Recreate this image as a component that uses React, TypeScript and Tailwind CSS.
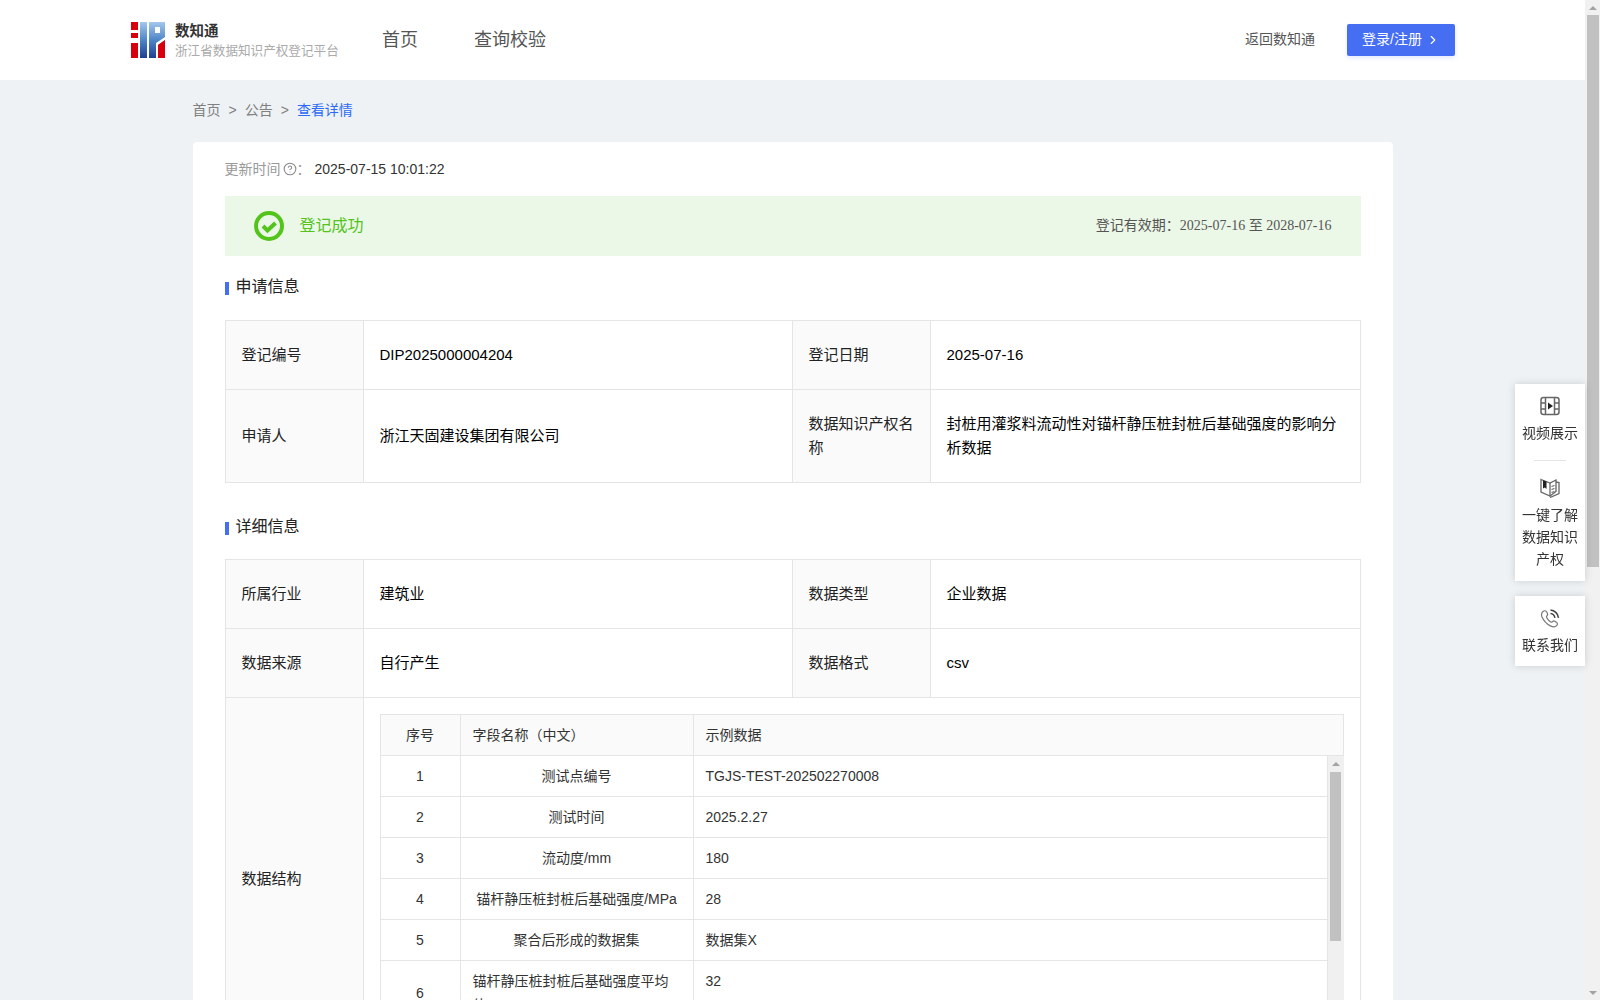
import { ChevronRight, CircleHelp } from 'lucide-react'

const FONT = '"Liberation Sans", "Noto Sans CJK SC", sans-serif'

const fields = [
  { no: '1', name: '测试点编号', sample: 'TGJS-TEST-202502270008' },
  { no: '2', name: '测试时间', sample: '2025.2.27' },
  { no: '3', name: '流动度/mm', sample: '180' },
  { no: '4', name: '锚杆静压桩封桩后基础强度/MPa', sample: '28' },
  { no: '5', name: '聚合后形成的数据集', sample: '数据集X' },
]

function Logo() {
  return (
    <svg width="34" height="36" viewBox="0 0 34 36" className="shrink-0">
      <defs>
        <linearGradient id="logoBlue" x1="0" y1="0" x2="0" y2="1">
          <stop offset="0" stopColor="#a3c8ec" />
          <stop offset="0.5" stopColor="#4f86c6" />
          <stop offset="1" stopColor="#1f3f8f" />
        </linearGradient>
      </defs>
      <rect x="0" y="0" width="7" height="8" fill="#d9000d" />
      <rect x="0" y="11" width="7" height="5" fill="#d9000d" />
      <rect x="0" y="21" width="7" height="15" fill="#d9000d" />
      <rect x="9" y="0" width="7" height="36" fill="url(#logoBlue)" />
      <rect x="18" y="0" width="16" height="36" fill="url(#logoBlue)" />
      <rect x="24" y="5" width="5" height="6" fill="#fff" />
      <path d="M25 36V21l9-6v3l-7 5v13z" fill="#fff" />
      <path d="M27 36V23l7-5v18z" fill="#d9000d" />
    </svg>
  )
}

function FilmIcon() {
  return (
    <svg width="20" height="20" viewBox="0 0 20 20" fill="none" stroke="#666" strokeWidth="1.5">
      <rect x="1" y="1.500" width="18" height="17" rx="2.500" />
      <path d="M5.500 1.500v17M14.500 1.500v17M1 7h4.500M1 13h4.500M14.500 7H19M14.500 13H19" />
      <path d="M8 6.500l5 3.500-5 3.500z" fill="#222" stroke="none" />
    </svg>
  )
}

function BookIcon() {
  return (
    <svg width="20" height="20" viewBox="0 0 20 20" fill="none" stroke="#666" strokeWidth="1.3">
      <path d="M1 1.500l9 3.500 6-3v11.500l-6 4.500-9-4z" />
      <path d="M16 4l3 .5v11L10 19.500" />
      <path d="M10 5v13.500" />
      <path d="M3 2.200l3.500 1.300v7.500L4.800 9.500 3 10.500z" fill="#222" stroke="none" />
      <path d="M11.500 8.500l3-1M11.500 11.500l3-1M11.500 14.500l3-1" />
    </svg>
  )
}

function PhoneIcon() {
  return (
    <svg width="20" height="20" viewBox="0 0 20 20" fill="none" stroke="#777" strokeWidth="1.200">
      <path d="M3 2.500c1.500-1.300 3-.8 3.700.6l.8 1.600c.4.900.1 1.600-.6 2.200-.5.500-.5 1-.1 1.800 1 1.900 2.300 3.300 4 4.300.7.400 1.200.3 1.700-.3.700-.8 1.500-.9 2.300-.4l1.600 1c1.200.8 1.400 2.200.2 3.400-1.500 1.500-3.600 1.500-6.200.2C6.500 14.800 3.500 11.500 2 8 1 5.500 1.500 3.800 3 2.500z" />
      <path d="M10.500 1c4 .3 7.500 3.500 8 7.800M10.500 4.500c2.200.2 4 2 4.400 4.300" stroke="#444" strokeWidth="1.500" />
    </svg>
  )
}

function InfoCell({ children, label }: { children: React.ReactNode; label?: boolean }) {
  return label ? (
    <td className="border border-[#e5e5e5] bg-[#fafafa] px-4 py-3 text-[15px] leading-[24px] text-[#222]">{children}</td>
  ) : (
    <td className="border border-[#e5e5e5] px-4 py-3 text-[15px] leading-[24px] text-black">{children}</td>
  )
}

function SectionTitle({ children }: { children: React.ReactNode }) {
  return (
    <div className="flex items-center gap-[7px] text-[16px] leading-[24px] text-[#222]">
      <span className="mt-[3px] h-[13px] w-[4px] bg-[#456ef3]" />
      {children}
    </div>
  )
}

function Columns() {
  return (
    <colgroup>
      <col className="w-[138px]" />
      <col className="w-[429px]" />
      <col className="w-[138px]" />
      <col />
    </colgroup>
  )
}

function FieldColumns() {
  return (
    <colgroup>
      <col className="w-[80px]" />
      <col className="w-[233px]" />
      <col />
    </colgroup>
  )
}

function FieldTable() {
  return (
    <div className="w-[964px]">
      <table className="w-full table-fixed border-collapse text-[14px] text-[#333]">
        <FieldColumns />
        <thead>
          <tr className="h-[41px] bg-[#fafafa]">
            <th className="border border-[#e5e5e5] font-normal">序号</th>
            <th className="border border-[#e5e5e5] px-3 text-left font-normal">字段名称（中文）</th>
            <th className="border border-[#e5e5e5] px-3 text-left font-normal">示例数据</th>
          </tr>
        </thead>
      </table>
      <div className="flex h-[288px] overflow-hidden">
        <div className="min-w-0 flex-1">
          <table className="-mt-px w-full table-fixed border-collapse text-[14px] text-[#333]">
            <FieldColumns />
            <tbody>
              {fields.map((f) => (
                <tr key={f.no} className="h-[41px]">
                  <td className="border border-[#e5e5e5] text-center">{f.no}</td>
                  <td className="border border-[#e5e5e5] px-3 text-center">{f.name}</td>
                  <td className="border border-[#e5e5e5] px-3">{f.sample}</td>
                </tr>
              ))}
              <tr className="h-[64px]">
                <td className="border border-[#e5e5e5] text-center">6</td>
                <td className="border border-[#e5e5e5] px-3 py-2 leading-[24px]">锚杆静压桩封桩后基础强度平均值</td>
                <td className="border border-[#e5e5e5] px-3 py-2 align-top leading-[24px]">32</td>
              </tr>
            </tbody>
          </table>
        </div>
        <div className="flex w-[16px] shrink-0 flex-col items-center bg-[#f0f0f0]">
          <div className="flex h-[16px] items-center justify-center">
            <span className="border-x-[4px] border-b-[4px] border-x-transparent border-b-[#a3a3a3]" />
          </div>
          <div className="h-[169px] w-[11px] bg-[#c1c1c1]" />
        </div>
      </div>
    </div>
  )
}

function SideWidget() {
  return (
    <div className="fixed right-[15px] top-[384px] flex w-[70px] flex-col gap-[15px] text-center text-[14px] leading-[22px] text-[#333]">
      <div className="bg-white px-[6px] pb-[11px] pt-[12px] shadow-[0_0_8px_rgba(0,0,0,0.15)]">
        <div className="flex justify-center">
          <FilmIcon />
        </div>
        <div className="mt-[6px]">视频展示</div>
        <div className="mx-auto mb-[17px] mt-[16px] h-px w-[32px] bg-[#e5e5e5]" />
        <div className="flex justify-center">
          <BookIcon />
        </div>
        <div className="mt-[6px]">一键了解数据知识产权</div>
      </div>
      <div className="bg-white px-[6px] pb-[10px] pt-[13px] shadow-[0_0_8px_rgba(0,0,0,0.15)]">
        <div className="flex justify-center">
          <PhoneIcon />
        </div>
        <div className="mt-[5px]">联系我们</div>
      </div>
    </div>
  )
}

function PageScrollbar() {
  return (
    <div className="flex w-[15px] shrink-0 flex-col items-center bg-[#f1f1f1]">
      <div className="flex h-[15px] items-center justify-center">
        <span className="border-x-[4px] border-b-[4px] border-x-transparent border-b-[#a3a3a3]" />
      </div>
      <div className="h-[552px] w-[12px] bg-[#c1c1c1]" />
      <div className="mt-auto flex h-[15px] items-center justify-center">
        <span className="border-x-[4px] border-t-[4px] border-x-transparent border-t-[#a3a3a3]" />
      </div>
    </div>
  )
}

export default function App() {
  return (
    <div className="flex h-screen overflow-hidden bg-[#eef2f5]" style={{ fontFamily: FONT }}>
      <div className="min-w-0 flex-1">
        <header className="flex h-[80px] items-center justify-between bg-white pl-[131px] pr-[130px]">
          <div className="flex items-center">
            <Logo />
            <div className="ml-[10px] w-[166px]">
              <div className="text-[14.5px] font-bold leading-[20px] text-[#333]">数知通</div>
              <div className="mt-px text-[12.6px] leading-[18px] whitespace-nowrap text-[#aaa]">浙江省数据知识产权登记平台</div>
            </div>
            <nav className="ml-[41px] flex gap-[56px] text-[18px] text-[#555]">
              <span>首页</span>
              <span>查询校验</span>
            </nav>
          </div>
          <div className="flex items-center gap-[32px]">
            <span className="pb-px text-[14px] text-[#555]">返回数知通</span>
            <button className="flex h-[32px] w-[108px] items-center justify-center gap-[4px] rounded-[2px] bg-[#456ef3] pb-px text-[14px] text-white shadow-[0_2px_4px_rgba(69,110,243,0.15)]">
              登录/注册
              <ChevronRight size={14} strokeWidth={2} />
            </button>
          </div>
        </header>

        <main className="mx-auto w-[1200px]">
          <div className="flex h-[62px] items-center gap-[8px] pb-[2px] text-[14px] text-[#808080]">
            <span>首页</span>
            <span>&gt;</span>
            <span>公告</span>
            <span>&gt;</span>
            <span className="text-[#2d6af6]">查看详情</span>
          </div>

          <div className="rounded-t-[4px] bg-white px-[32px] pb-[40px]">
            <div className="flex h-[54px] items-center text-[14px] text-[#999]">
              更新时间
              <CircleHelp size={14} strokeWidth={1.8} className="ml-[2px] text-[#888]" />：
              <span className="ml-[4px] text-[#333]">2025-07-15 10:01:22</span>
            </div>

            <div className="flex h-[60px] items-center justify-between bg-[#ebf7e7] pl-[29px] pr-[29px]">
              <div className="flex items-center gap-[16px] text-[16px] text-[#52c41a]">
                <svg width="30" height="30" viewBox="0 0 30 30" fill="none" stroke="#52c41a">
                  <circle cx="15" cy="15" r="13" strokeWidth="4" />
                  <path d="M9 15l4.500 4.500 8-7.500" strokeWidth="4" />
                </svg>
                登记成功
              </div>
              <div className="-mt-px text-[14px] text-[#555]">
                登记有效期：<span className="font-['Liberation_Serif','Noto_Sans_CJK_SC',serif]">2025-07-16 至 2028-07-16</span>
              </div>
            </div>

            <div className="mt-[19px]">
              <SectionTitle>申请信息</SectionTitle>
            </div>
            <table className="mt-[21px] w-full table-fixed border-collapse">
              <Columns />
              <tbody>
                <tr className="h-[69px]">
                  <InfoCell label>登记编号</InfoCell>
                  <InfoCell>DIP2025000004204</InfoCell>
                  <InfoCell label>登记日期</InfoCell>
                  <InfoCell>2025-07-16</InfoCell>
                </tr>
                <tr className="h-[93px]">
                  <InfoCell label>申请人</InfoCell>
                  <InfoCell>浙江天固建设集团有限公司</InfoCell>
                  <InfoCell label>数据知识产权名称</InfoCell>
                  <InfoCell>封桩用灌浆料流动性对锚杆静压桩封桩后基础强度的影响分析数据</InfoCell>
                </tr>
              </tbody>
            </table>

            <div className="mt-[32px]">
              <SectionTitle>详细信息</SectionTitle>
            </div>
            <table className="mt-[20px] w-full table-fixed border-collapse">
              <Columns />
              <tbody>
                <tr className="h-[69px]">
                  <InfoCell label>所属行业</InfoCell>
                  <InfoCell>建筑业</InfoCell>
                  <InfoCell label>数据类型</InfoCell>
                  <InfoCell>企业数据</InfoCell>
                </tr>
                <tr className="h-[69px]">
                  <InfoCell label>数据来源</InfoCell>
                  <InfoCell>自行产生</InfoCell>
                  <InfoCell label>数据格式</InfoCell>
                  <InfoCell>csv</InfoCell>
                </tr>
                <tr>
                  <InfoCell label>数据结构</InfoCell>
                  <td colSpan={3} className="border border-[#e5e5e5] p-4">
                    <FieldTable />
                  </td>
                </tr>
              </tbody>
            </table>
          </div>
        </main>
      </div>

      <PageScrollbar />
      <SideWidget />
    </div>
  )
}
